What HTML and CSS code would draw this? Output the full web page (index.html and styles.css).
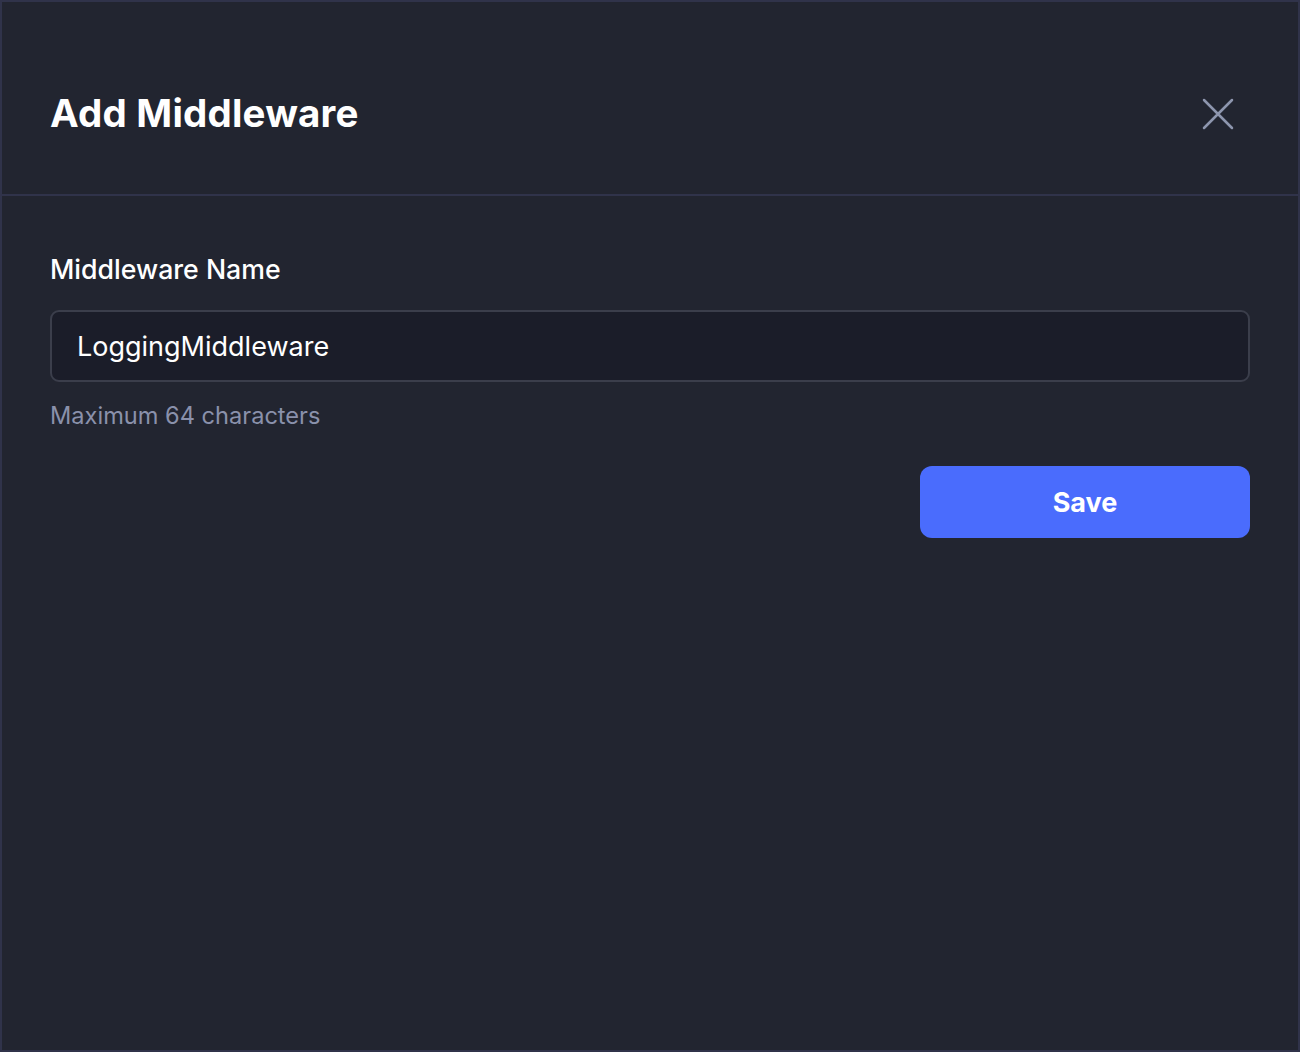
FILE: index.html
```html
<!DOCTYPE html>
<html>
<head>
<meta charset="utf-8">
<link rel="stylesheet" href="styles.css">
</head>
<body>
<div class="modal">
  <header class="modal-header">
    <h1 class="title">Add Middleware</h1>
    <button class="close" aria-label="Close">
      <svg width="32" height="32" viewBox="0 0 32 32"><path d="M2 2 L30 30 M30 2 L2 30" stroke="#8e96ae" stroke-width="2.5" stroke-linecap="round" fill="none"/></svg>
    </button>
  </header>
  <div class="modal-body">
    <label class="label">Middleware Name</label>
    <div class="input">LoggingMiddleware</div>
    <div class="hint">Maximum 64 characters</div>
    <div class="actions">
      <button class="save">Save</button>
    </div>
  </div>
</div>
</body>
</html>
```
FILE: styles.css
```css
html, body { margin: 0; padding: 0; }
body { background: #222530; font-family: Inter, "Noto Sans", sans-serif; }
.modal {
  box-sizing: border-box;
  width: 1300px;
  height: 1052px;
  border: 2px solid #30334a;
  background: #222530;
  display: flex;
  flex-direction: column;
}
.modal-header {
  height: 194px;
  box-sizing: border-box;
  border-bottom: 2px solid #30334a;
  display: flex;
  align-items: center;
  justify-content: space-between;
  padding: 30px 48px 0 48px;
}
.title {
  margin: 0;
  color: #ffffff;
  font-size: 38.5px;
  font-weight: 700;
  letter-spacing: 0.2px;
}
.close {
  background: none;
  border: 0;
  padding: 0;
  width: 32px;
  height: 32px;
  margin-right: 16px;
  margin-top: 2px;
  cursor: pointer;
  display: flex;
}
.modal-body {
  padding: 55px 48px 0 48px;
  display: flex;
  flex-direction: column;
}
.label {
  color: #ffffff;
  font-size: 26.7px;
  font-weight: 500;
  line-height: 36px;
}
.input {
  margin-top: 23px;
  box-sizing: border-box;
  height: 72px;
  border: 2px solid #3b3e4b;
  border-radius: 9px;
  background: #1b1d29;
  color: #ffffff;
  font-size: 27px;
  display: flex;
  align-items: center;
  padding-left: 25px;
}
.hint {
  margin-top: 18px;
  color: #8a91ab;
  font-size: 23.6px;
  line-height: 32px;
}
.actions {
  display: flex;
  justify-content: flex-end;
  margin-top: 34px;
}
.save {
  width: 330px;
  height: 72px;
  border: 0;
  border-radius: 12px;
  background: #4a6cfd;
  color: #ffffff;
  font-family: Inter, "Noto Sans", sans-serif;
  font-size: 27px;
  font-weight: 700;
}
```
